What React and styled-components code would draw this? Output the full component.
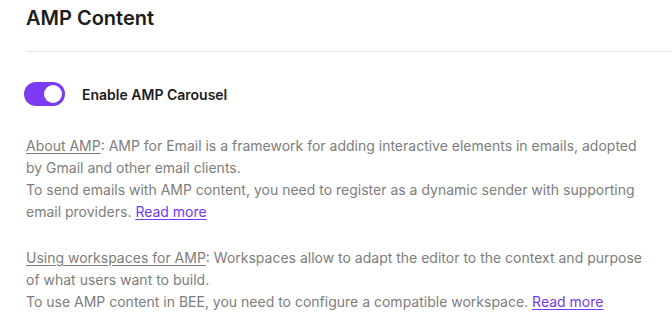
import React, { useState } from "react";
import styled, { createGlobalStyle } from "styled-components";

const GlobalStyle = createGlobalStyle`
  body {
    margin: 0;
    background: #fff;
    font-family: Inter, "Noto Sans", sans-serif;
  }
`;

const Page = styled.div`
  padding-left: 26px;
`;

const Header = styled.div`
  padding: 6px 0 21px;
  border-bottom: 1px solid #e4e4e4;
`;

const Title = styled.h1`
  margin: 0;
  font-size: 20px;
  line-height: 24px;
  font-weight: 600;
  color: #1c1c1c;
`;

const Body = styled.div`
  padding: 30px 26px 0 0;
`;

const ToggleRow = styled.label`
  display: flex;
  align-items: center;
  gap: 17px;
  margin-left: -2px;
  cursor: pointer;
`;

const Track = styled.span`
  position: relative;
  display: inline-block;
  width: 41px;
  height: 24px;
  border-radius: 12px;
  background: ${props => (props.on ? "#7b3bf2" : "#c9c9c9")};
  transition: background 0.2s;
`;

const Knob = styled.span`
  position: absolute;
  top: 3px;
  left: ${props => (props.on ? "20px" : "3px")};
  width: 18px;
  height: 18px;
  border-radius: 50%;
  background: #fff;
  transition: left 0.2s;
`;

const ToggleLabel = styled.span`
  font-size: 14px;
  font-weight: 600;
  color: #1c1c1c;
`;

const Info = styled.p`
  margin: ${props => (props.first ? "29px" : "24px")} 0 0;
  font-size: 14px;
  line-height: 22px;
  color: #7d7d7d;
`;

const Term = styled.span`
  text-decoration: underline;
  text-underline-offset: 2px;
`;

const Link = styled.a`
  color: #7238f5;
  text-decoration: underline;
  text-underline-offset: 2px;
`;

export default function App() {
  const [enabled, setEnabled] = useState(true);

  return (
    <Page>
      <GlobalStyle />
      <Header>
        <Title>AMP Content</Title>
      </Header>
      <Body>
        <ToggleRow onClick={() => setEnabled(!enabled)}>
          <Track on={enabled ? 1 : 0}>
            <Knob on={enabled ? 1 : 0} />
          </Track>
          <ToggleLabel>Enable AMP Carousel</ToggleLabel>
        </ToggleRow>
        <Info first>
          <Term>About AMP</Term>: AMP for Email is a framework for adding
          interactive elements in emails, adopted by Gmail and other email
          clients.
          <br />
          To send emails with AMP content, you need to register as a dynamic
          sender with supporting email providers. <Link href="#">Read more</Link>
        </Info>
        <Info>
          <Term>Using workspaces for AMP</Term>: Workspaces allow to adapt the
          editor to the context and purpose of what users want to build.
          <br />
          To use AMP content in BEE, you need to configure a compatible
          workspace. <Link href="#">Read more</Link>
        </Info>
      </Body>
    </Page>
  );
}
